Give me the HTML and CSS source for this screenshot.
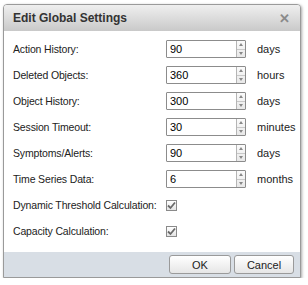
FILE: index.html
```html
<!DOCTYPE html>
<html lang="en">
<head>
    <meta charset="UTF-8">
    <title>Edit Global Settings</title>
    <link rel="stylesheet" href="styles.css">
</head>
<body>
    <div class="dialog">
        <div class="dialog-header">
            <span class="dialog-title">Edit Global Settings</span>
            <span class="dialog-close">&#x2715;</span>
        </div>
        <div class="dialog-body">
            <div class="row">
                <label>Action History:</label>
                <div class="spinner"><input type="text" value="90"><span class="spin"><i class="up"></i><i class="down"></i></span></div>
                <span class="unit">days</span>
            </div>
            <div class="row">
                <label>Deleted Objects:</label>
                <div class="spinner"><input type="text" value="360"><span class="spin"><i class="up"></i><i class="down"></i></span></div>
                <span class="unit">hours</span>
            </div>
            <div class="row">
                <label>Object History:</label>
                <div class="spinner"><input type="text" value="300"><span class="spin"><i class="up"></i><i class="down"></i></span></div>
                <span class="unit">days</span>
            </div>
            <div class="row">
                <label>Session Timeout:</label>
                <div class="spinner"><input type="text" value="30"><span class="spin"><i class="up"></i><i class="down"></i></span></div>
                <span class="unit">minutes</span>
            </div>
            <div class="row">
                <label>Symptoms/Alerts:</label>
                <div class="spinner"><input type="text" value="90"><span class="spin"><i class="up"></i><i class="down"></i></span></div>
                <span class="unit">days</span>
            </div>
            <div class="row">
                <label>Time Series Data:</label>
                <div class="spinner"><input type="text" value="6"><span class="spin"><i class="up"></i><i class="down"></i></span></div>
                <span class="unit">months</span>
            </div>
            <div class="row">
                <label>Dynamic Threshold Calculation:</label>
                <span class="check">
                    <svg width="9" height="9" viewBox="0 0 9 9"><path d="M1 4.5 L3.5 7 L8 1.5" fill="none" stroke="#6a6a6a" stroke-width="1.8"/></svg>
                </span>
            </div>
            <div class="row">
                <label>Capacity Calculation:</label>
                <span class="check">
                    <svg width="9" height="9" viewBox="0 0 9 9"><path d="M1 4.5 L3.5 7 L8 1.5" fill="none" stroke="#6a6a6a" stroke-width="1.8"/></svg>
                </span>
            </div>
        </div>
        <div class="dialog-footer">
            <button class="btn">OK</button>
            <button class="btn">Cancel</button>
        </div>
    </div>
</body>
</html>
```

FILE: styles.css
```css
body {
    margin: 0;
    padding: 4px 0 0 3px;
    background-color: #fff;
    font-family: "Liberation Sans", Arial, sans-serif;
    font-size: 11px;
    color: #222;
}

.dialog {
    width: 296px;
    border: 1px solid #9a9a9a;
    border-radius: 4px 4px 0 0;
    box-shadow: 1px 1px 3px rgba(0, 0, 0, 0.35);
    background-color: #fff;
}

.dialog-header {
    height: 26px;
    display: flex;
    align-items: center;
    justify-content: space-between;
    padding: 0 10px 0 9px;
    background: linear-gradient(#efefef, #c9c9c9);
    border-radius: 3px 3px 0 0;
}

.dialog-title {
    font-weight: bold;
    font-size: 12px;
    color: #333;
}

.dialog-close {
    font-size: 13px;
    font-weight: bold;
    color: #8a8a8a;
}

.dialog-body {
    padding: 5px 0 8px 9px;
}

.row {
    display: flex;
    align-items: center;
    height: 26px;
}

.row label {
    width: 153px;
    flex-shrink: 0;
    white-space: nowrap;
    font-size: 10.5px;
    letter-spacing: -0.15px;
}

.spinner {
    display: flex;
    width: 80px;
    height: 18px;
    box-sizing: border-box;
    border: 1px solid #8c8c8c;
    border-radius: 1px;
}

.spinner input {
    width: 63px;
    border: none;
    padding: 0 3px;
    font: inherit;
    color: #000;
    outline: none;
}

.spin {
    flex: 1;
    display: flex;
    flex-direction: column;
    border-left: 1px solid #b5b5b5;
    background: linear-gradient(#fbfbfb, #e8e8e8);
}

.spin i {
    flex: 1;
    display: flex;
    align-items: center;
    justify-content: center;
}

.spin i.up {
    border-bottom: 1px solid #c8c8c8;
}

.spin i.up::before {
    content: "";
    border-left: 2px solid transparent;
    border-right: 2px solid transparent;
    border-bottom: 3px solid #888;
}

.spin i.down::before {
    content: "";
    border-left: 2px solid transparent;
    border-right: 2px solid transparent;
    border-top: 3px solid #888;
}

.unit {
    margin-left: 11px;
    white-space: nowrap;
}

.check {
    width: 11px;
    height: 11px;
    box-sizing: border-box;
    border: 1px solid #8a8a8a;
    background: linear-gradient(#fff, #e4e4e4);
    display: flex;
    align-items: center;
    justify-content: center;
}

.dialog-footer {
    height: 25px;
    display: flex;
    justify-content: flex-end;
    align-items: center;
    gap: 3px;
    padding-right: 6px;
    background-color: #d8dee5;
}

.btn {
    height: 19px;
    padding: 0;
    font-family: "Liberation Sans", Arial, sans-serif;
    font-size: 11px;
    color: #222;
    border: 1px solid #9a9a9a;
    border-radius: 3px;
    background: linear-gradient(#ffffff, #e6e6e6);
}

.btn:first-child {
    width: 62px;
}

.btn:last-child {
    width: 60px;
}
```
